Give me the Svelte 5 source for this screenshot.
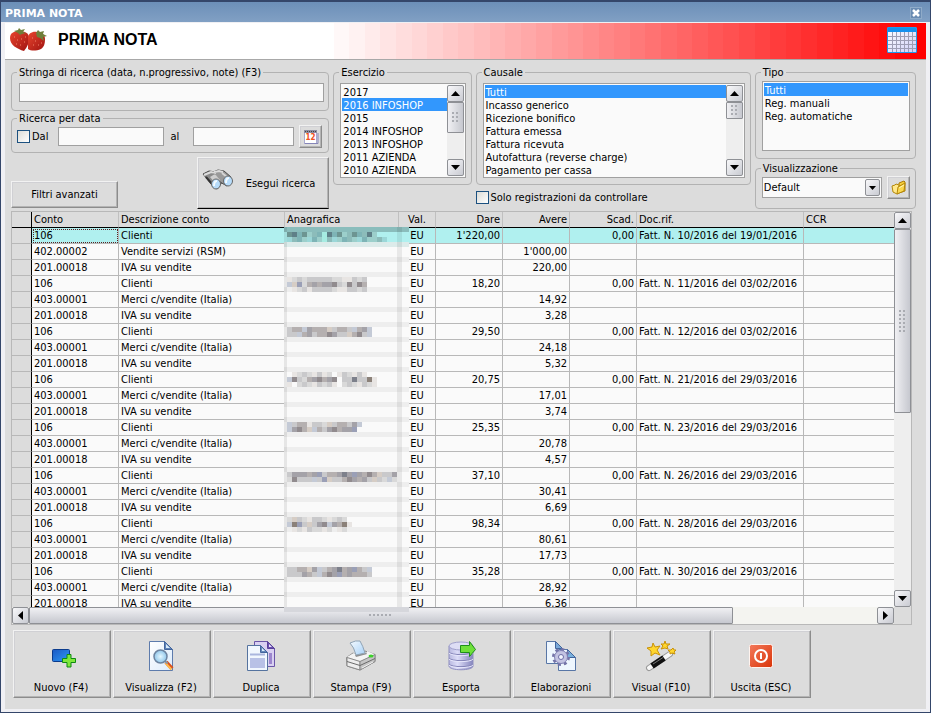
<script>
  const esercizi = ['2017', '2016 INFOSHOP', '2015', '2014 INFOSHOP', '2013 INFOSHOP', '2011 AZIENDA', '2010 AZIENDA'];
  const causali = ['Tutti', 'Incasso generico', 'Ricezione bonifico', 'Fattura emessa', 'Fattura ricevuta', 'Autofattura (reverse charge)', 'Pagamento per cassa'];
  const tipi = ['Tutti', 'Reg. manuali', 'Reg. automatiche'];

  const entries = [
    { dare: "1'220,00", avere: "1'000,00", iva: '220,00', doc: 'Fatt. N. 10/2016 del 19/01/2016', rsm: true },
    { dare: '18,20', avere: '14,92', iva: '3,28', doc: 'Fatt. N. 11/2016 del 03/02/2016' },
    { dare: '29,50', avere: '24,18', iva: '5,32', doc: 'Fatt. N. 12/2016 del 03/02/2016' },
    { dare: '20,75', avere: '17,01', iva: '3,74', doc: 'Fatt. N. 21/2016 del 29/03/2016' },
    { dare: '25,35', avere: '20,78', iva: '4,57', doc: 'Fatt. N. 23/2016 del 29/03/2016' },
    { dare: '37,10', avere: '30,41', iva: '6,69', doc: 'Fatt. N. 26/2016 del 29/03/2016' },
    { dare: '98,34', avere: '80,61', iva: '17,73', doc: 'Fatt. N. 28/2016 del 29/03/2016' },
    { dare: '35,28', avere: '28,92', iva: '6,36', doc: 'Fatt. N. 30/2016 del 29/03/2016' }
  ];
  const rows = entries.flatMap((e) => [
    { conto: '106', descr: 'Clienti', dare: e.dare, avere: '', scad: '0,00', doc: e.doc },
    { conto: e.rsm ? '402.00002' : '403.00001', descr: e.rsm ? 'Vendite servizi (RSM)' : 'Merci c/vendite (Italia)', dare: '', avere: e.avere, scad: '', doc: '' },
    { conto: '201.00018', descr: 'IVA su vendite', dare: '', avere: e.iva, scad: '', doc: '' }
  ]);

  // Mosaic that hides the customer names: one letter per 5px block.
  const tones = {
    a: '#c9c9cb', b: '#b5b0b0', c: '#a4a2a8', d: '#918b8e', e: '#d9d9d9', f: '#e8e5e3',
    g: '#c4cad6', h: '#9a9fb6', i: '#d6cdc5', j: '#7d808b', k: '#8b8179',
    p: '#8cbcba', q: '#6d9592', r: '#7eb4b6', s: '#5f8088', t: '#9ccfcb', u: '#a6ece2', v: '#9bd7d8'
  };
  const mosaic = [
    [1, 'qsrqtprusrqtpqrpst'], [2, 'vprtvrtupvtrptvrttpv'],
    [10, 'feaeaaaaaeeffaea'], [11, 'gihebcbccdaedadb'], [12, '.feafaaaaeffaaea'],
    [20, 'abbgcbbbiabbagbcg'], [21, 'aagbcabbdcaaibdag'],
    [29, '.feaefafe.faefaf.'], [30, 'gdaebcdbcd.aajaakf'], [31, 'f.eaefaeaf.eaefaef'],
    [39, 'gabbfaaeiabbacg'], [40, 'gcdbigbacdbcch'],
    [49, 'acccbchabbcjchcbdbiaac'], [50, 'edaaagahiaabdcbcaiaege'],
    [58, 'eiaefaaefeae'], [59, 'gkhaiacdgcbkf'], [60, '.fefaeefe.fe.'],
    [68, 'aabbicgabcjbchbag'], [69, 'aaacbagbdchbcbbba']
  ];
  const blocks = mosaic.flatMap(([k, s]) => [...s].map((t, n) => ({ x: 3 + n * 5, y: k * 5, fill: tones[t] })).filter((b) => b.fill));
  const bands = Array.from({ length: 23 }, (_, r) => Math.floor((16 + 16 * (r + 1)) / 5) * 5);

  // Banner fades from white to red in flat vertical steps.
  const steps = 39;
  const banner = 'linear-gradient(90deg, #fff 34%, ' + Array.from({ length: steps }, (_, n) => {
    const v = Math.round(255 - (255 * n) / (steps - 1));
    const at = (m) => (34 + (66 * m) / steps).toFixed(2) + '%';
    return `rgb(255 ${v} ${v}) ${at(n)} ${at(n + 1)}`;
  }).join(', ') + ')';

  let esercizio = $state('2016 INFOSHOP');
  let causale = $state('Tutti');
  let tipo = $state('Tutti');
  let active = $state(0);

  const actions = [
    ['Nuovo (F4)', 'nuovo'], ['Visualizza (F2)', 'visualizza'], ['Duplica', 'duplica'], ['Stampa (F9)', 'stampa'],
    ['Esporta', 'esporta'], ['Elaborazioni', 'elabora'], ['Visual (F10)', 'visual'], ['Uscita (ESC)', 'uscita']
  ];
</script>

{#snippet arrow(dir, label)}
  <button class="arrow" aria-label={label}>
    <svg width="9" height="9" viewBox="0 0 9 9">
      <path d={{ up: 'M0 7h9L4.500 2z', down: 'M0 2h9L4.500 7z', left: 'M2 4.500L7 0v9z', right: 'M7 4.500L2 0v9z' }[dir]} />
    </svg>
  </button>
{/snippet}

{#snippet vscroll(size)}
  <div class="vscroll">
    {@render arrow('up', 'Scorri su')}
    <div class="track"><div class="thumb" style="height:{size}%"><span class="grip"></span></div></div>
    {@render arrow('down', 'Scorri giù')}
  </div>
{/snippet}

{#snippet icon(name)}
  <svg class="ico" width="32" height="32" viewBox="0 0 32 32">
    {#if name === 'nuovo'}
      <rect x="7.500" y="9.500" width="17" height="12" rx="1" fill="url(#blue)" stroke="#0b3b8c" />
      <path d="M22 14.500h4v4h4.500v4H26v4.500h-4v-4.500h-4.500v-4H22z" fill="#7fe83c" stroke="#0f8a12" />
    {:else if name === 'visualizza'}
      <path d="M4.500 1.500h15l8 8v21h-23z" fill="url(#paper)" stroke="#5d7bac" />
      <path d="M19.500 1.500v8h8z" fill="#5f83b8" stroke="#42659d" /><path d="M21 4l4 4h-4z" fill="#d7ebfa" />
      <path d="M21 22l6 6.500" stroke="#d9501e" stroke-width="4" /><path d="M20.500 23l6 6.500" stroke="#ffb84a" stroke-width="2" />
      <path d="M19.500 20.500l3 3" stroke="#8a96a5" stroke-width="2" />
      <circle cx="15.500" cy="16.500" r="6.500" fill="url(#lens)" stroke="#6d84a0" stroke-width="1.500" />
    {:else if name === 'duplica'}
      <path d="M9.500 1.500h13l7 7v18h-20z" fill="#d9d0f2" stroke="#6a55a8" /><path d="M22.500 1.500v7h7z" fill="#6a4fae" stroke="#58409b" /><path d="M24 4l3 3h-3z" fill="#e8e2fb" />
      <rect x="24" y="13" width="3" height="11" fill="#9c86ce" />
      <path d="M2.500 5.500h13l7 7v18h-20z" fill="#f1f7fe" stroke="#55739f" /><path d="M15.500 5.500v7h7z" fill="#6487ba" stroke="#42659d" /><path d="M17 8l3 3h-3z" fill="#dceefb" />
      <path d="M5 14.500h15" stroke="#aab6de" stroke-width="2" /><rect x="5" y="18" width="15" height="10" fill="#b8c1e6" />
    {:else if name === 'stampa'}
      <path d="M1.500 17.500L8 13l2 1 10-3 10 3.500v7L15 30 2 26z" fill="#d4d4d4" stroke="#8b8b8b" />
      <path d="M2 17l7-4 3 3 10-2v-3l8 3.500L15 21z" fill="#f4f4f4" />
      <path d="M2 17.500l13 4V30L2 26z" fill="#ededed" stroke="#8a8a8a" />
      <path d="M15 21.500l15-7v7L15 30z" fill="#c4c4c4" stroke="#8a8a8a" />
      <path d="M2 21.500l13 4 15-7" fill="none" stroke="#6b6b6b" /><path d="M17 28l11-6" stroke="#f2f2f2" />
      <path d="M10 15l11-2 1 1-11 3z" fill="#8f8f8f" />
      <path d="M5 3q6-3 10-2 3 5 5 12l-9 2Q9 7 5 3z" fill="url(#sheet)" stroke="#8fa3b5" />
      <ellipse cx="26" cy="16" rx="2.500" ry="1.500" fill="#3dd02c" />
    {:else if name === 'esporta'}
      <path d="M4 6v20c0 5 24 5 24 0V6z" fill="url(#drum)" stroke="#8f8fc0" />
      <path d="M4 12c2 3.500 22 3.500 24 0M4 18c2 3.500 22 3.500 24 0M4 24c2 3.500 22 3.500 24 0" fill="none" stroke="#8484b8" /><path d="M4 13c2 3.500 22 3.500 24 0M4 19c2 3.500 22 3.500 24 0M4 25c2 3.500 22 3.500 24 0" fill="none" stroke="#e6e6fb" />
      <ellipse cx="16" cy="6" rx="12" ry="4" fill="#dedef5" stroke="#a0a0cc" />
      <path d="M15.500 5.500h9v-4l6 8-6 7v-4h-9z" fill="#6fe03a" stroke="#1f8f1a" />
    {:else if name === 'elabora'}
      <path d="M1.500 1.500h9l7 7v15h-16z" fill="#eef6fe" stroke="#5876a6" /><path d="M10.500 1.500v7h7z" fill="#79a8d8" stroke="#42659d" />
      <path d="M13.500 9.500h9l8 8v13h-17z" fill="#eef6fe" stroke="#5876a6" /><path d="M22.500 9.500v8h8z" fill="#79b0dc" stroke="#42659d" />
      <circle cx="16" cy="17" r="7.500" fill="none" stroke="#7474a8" stroke-width="3" stroke-dasharray="3 2.890" />
      <circle cx="16" cy="17" r="6.500" fill="#c3c3e2" stroke="#8080b4" /><circle cx="16" cy="17" r="2.500" fill="#f4f6ff" stroke="#6d6da5" />
    {:else if name === 'visual'}
      <path d="M4 28L25 14" stroke="#999" stroke-width="6" stroke-linecap="round" /><path d="M4 28L25 14" stroke="#f8f8f8" stroke-width="4" stroke-linecap="round" />
      <path d="M7 26L19 18" stroke="#111" stroke-width="6" /><path d="M8 24l10-6.500" stroke="#777" />
      <path d="M8 3l2 4 5-1-3 4 3 5-5-2-4 3v-5L2 8l5-1z" fill="#ffd62e" stroke="#c99208" />
      <path d="M20 1l1 3h4l-3 2 1 3-3-1-4 1 2-3-2-2h3z" fill="#ffd62e" stroke="#c99208" /><path d="M28 8l1 2h2l-2 2 1 2-3-1-2 1v-2l-2-2h3z" fill="#ffd62e" stroke="#c99208" />
    {:else}
      <rect x="4.500" y="4.500" width="23" height="23" rx="2" fill="url(#red)" stroke="#fff3ee" />
      <circle cx="16" cy="16" r="6" fill="none" stroke="#fff" stroke-width="2" /><path d="M16 13v6" stroke="#fff" stroke-width="2" />
    {/if}
  </svg>
{/snippet}

<svg class="defs" width="0" height="0" aria-hidden="true">
  <defs>
    <linearGradient id="blue" x2="1" y2="1"><stop stop-color="#1b59c4" /><stop offset="1" stop-color="#2f9af5" /></linearGradient>
    <linearGradient id="paper" x2="1" y2="1"><stop stop-color="#fff" /><stop offset="1" stop-color="#dcebfb" /></linearGradient>
    <linearGradient id="sheet" x2="1" y2="1"><stop stop-color="#f4faff" /><stop offset="1" stop-color="#a9d2f8" /></linearGradient>
    <radialGradient id="lens"><stop stop-color="#e4f7ff" /><stop offset="1" stop-color="#8fc6ea" /></radialGradient>
    <linearGradient id="drum"><stop stop-color="#b9b9e0" /><stop offset=".35" stop-color="#dcdcf8" /><stop offset="1" stop-color="#8585bd" /></linearGradient>
    <linearGradient id="red" x2="1" y2="1"><stop stop-color="#f47a5c" /><stop offset="1" stop-color="#d93408" /></linearGradient>
    <linearGradient id="berry" x2="1" y2="1"><stop stop-color="#e8452e" /><stop offset="1" stop-color="#a01310" /></linearGradient>
    <linearGradient id="cells" x2="1" y2="1"><stop stop-color="#fff" /><stop offset="1" stop-color="#cfcff8" /></linearGradient>
  </defs>
</svg>

<div class="window">
  <header class="titlebar">
    <span>PRIMA NOTA</span>
    <button class="close" aria-label="Chiudi"><svg width="8" height="8" viewBox="0 0 8 8"><path d="M1 1l6 6M7 1l-6 6" stroke="#fff" stroke-width="2.500" /></svg></button>
  </header>

  <div class="frame">
    <div class="banner" style="background:{banner}">
      <svg width="38" height="26" viewBox="0 0 38 26">
        <path d="M0 11c0-5 4-7 9-7 6 0 10 2 10 7 0 6-2 9-5 13C7 22 0 18 0 11z" fill="url(#berry)" />
        <path d="M18 11c0-5 5-7 9-6 5 0 8 3 8 7 0 5-1 8-4 10-5 2-10 2-13 0z" fill="url(#berry)" />
        <path d="M4 4l4-1 1-2 2 2 4-1-2 3 3 1-4 1-2 1-2-2zM26 6l2-3 2 2 4-1-1 3 4 2-4 1 1 4-4-3-3-1z" fill="#6f7f3a" />
        <path d="M4 10h1M7 13h1M6 17h1M11 12h1M10 18h1M14 15h1M15 10h1M22 11h1M25 14h1M23 18h1M28 18h1M31 16h1" stroke="#f0836a" />
      </svg>
      <h1>PRIMA NOTA</h1>
      <svg width="30" height="26" viewBox="0 0 30 26">
        <rect x="0.500" y="0.500" width="29" height="25" rx="1" fill="url(#cells)" stroke="#1c9cf0" />
        <rect x="1" y="1" width="28" height="4" fill="#1590ee" />
        <path d="M5.500 5v20M9.500 5v20M13.500 5v20M17.500 5v20M21.500 5v20M25.500 5v20M1 9.500h28M1 13.500h28M1 17.500h28M1 21.500h28" stroke="#9d9db4" />
        <rect x="0.500" y="0.500" width="29" height="25" rx="1" fill="none" stroke="#1c9cf0" />
      </svg>
    </div>

    <main>
      <section class="filters">
        <div class="col">
          <fieldset class="search">
            <legend><label for="q">Stringa di ricerca (data, n.progressivo, note) (F3)</label></legend>
            <input id="q" type="text" />
          </fieldset>
          <fieldset class="dates">
            <legend>Ricerca per data</legend>
            <div class="daterow">
              <label class="check"><input type="checkbox" />Dal</label>
              <input class="from" type="text" aria-label="Dal" />
              <label class="al" for="to">al</label>
              <input class="to" id="to" type="text" />
              <button class="raised small" aria-label="Calendario">
                <svg width="16" height="16" viewBox="0 0 16 16">
                  <rect x="1.500" y="2.500" width="12" height="12" fill="#fff" stroke="#a9a9cf" /><path d="M2 14.500h13V4" fill="none" stroke="#8585b8" />
                  <rect x="1" y="1" width="13" height="3" fill="#8f8fa3" /><path d="M2 2.500h11" stroke="#444" stroke-dasharray="1 1" />
                  <text x="7.500" y="11" text-anchor="middle" font-size="8" font-weight="bold" fill="#f0501c">12</text>
                </svg>
              </button>
            </div>
          </fieldset>
          <div class="run">
            <button class="raised adv">Filtri avanzati</button>
            <button class="raised exec">
              <svg width="32" height="22" viewBox="0 0 32 22">
                <path d="M1 5L7 2l7 1 7 9-6 8-5-4z" fill="#8a8a8a" stroke="#444" /><path d="M11 3l5-2 6 1 7 6-4 9-7-4z" fill="#999" stroke="#4a4a4a" />
                <path d="M2 6l7-3 5 1M12 3l5-1 4 1" fill="none" stroke="#dcdcdc" stroke-width="2" /><path d="M8 8l5-3 5 6-4 4z" fill="#cfcfcf" /><path d="M20 4l5 4" stroke="#d5d5d5" stroke-width="2" /><path d="M4 8l6 7" stroke="#333" stroke-width="2" />
                <ellipse cx="14" cy="15" rx="4.500" ry="5" fill="#b7dcfa" stroke="#666" /><ellipse cx="26" cy="12" rx="4.500" ry="5" fill="#b7dcfa" stroke="#666" />
                <path d="M12 17c0-3 1-5 3-5M24 14c0-3 1-5 3-5" fill="none" stroke="#f4fbff" stroke-width="2" />
              </svg>
              <span>Esegui ricerca</span>
            </button>
          </div>
        </div>

        <div class="col">
          <fieldset class="lists">
            <legend><label for="es">Esercizio</label></legend>
            <div class="listbox">
              <select id="es" size="7" bind:value={esercizio}>
                {#each esercizi as o}<option value={o} class:on={o === esercizio}>{o}</option>{/each}
              </select>
              {@render vscroll(54)}
            </div>
          </fieldset>
        </div>

        <div class="col">
          <fieldset class="lists">
            <legend><label for="ca">Causale</label></legend>
            <div class="listbox">
              <select id="ca" size="7" bind:value={causale}>
                {#each causali as o}<option value={o} class:on={o === causale}>{o}</option>{/each}
              </select>
              {@render vscroll(30)}
            </div>
          </fieldset>
          <label class="check only"><input type="checkbox" />Solo registrazioni da controllare</label>
        </div>

        <div class="col">
          <fieldset class="tipo">
            <legend><label for="ti">Tipo</label></legend>
            <div class="listbox">
              <select id="ti" size="5" bind:value={tipo}>
                {#each tipi as o}<option value={o} class:on={o === tipo}>{o}</option>{/each}
              </select>
            </div>
          </fieldset>
          <fieldset class="vis">
            <legend><label for="vi">Visualizzazione</label></legend>
            <div class="visrow">
              <div class="combo">
                <select id="vi"><option>Default</option></select>
                <span class="drop"><svg width="9" height="9" viewBox="0 0 9 9"><path d="M1 3h7L4.500 7z" /></svg></span>
              </div>
              <button class="raised small" aria-label="Apri visualizzazione">
                <svg width="16" height="16" viewBox="0 0 16 16">
                  <path d="M8 3l5-2 1 1v9l-6 2z" fill="#f7cf3a" stroke="#a97b08" /><path d="M1 6l3-1 1-1 3 1v8l-2 1-4-2z" fill="#ffe88a" stroke="#b48709" /><path d="M6 14l1-7 7-4-1 8z" fill="#fbd84e" stroke="#b48709" /><path d="M8 8l5-3" stroke="#fff3b4" />
                </svg>
              </button>
            </div>
          </fieldset>
        </div>
      </section>

      <section class="grid">
        <div class="view">
          <table>
            <colgroup><col class="c0" /><col class="c1" /><col class="c2" /><col class="c3" /><col class="c4" /><col class="c5" /><col class="c5" /><col class="c5" /><col class="c6" /><col /></colgroup>
            <thead>
              <tr><th class="mark"></th><th>Conto</th><th>Descrizione conto</th><th>Anagrafica</th><th class="mid">Val.</th><th class="num">Dare</th><th class="num">Avere</th><th class="num">Scad.</th><th>Doc.rif.</th><th>CCR</th></tr>
            </thead>
            <tbody>
              {#each rows as r, n}
                <tr class:active={n === active} onclick={() => (active = n)}>
                  <td class="mark"></td><td class="key">{r.conto}</td><td>{r.descr}</td><td></td><td class="mid">EU</td>
                  <td class="num">{r.dare}</td><td class="num">{r.avere}</td><td class="num">{r.scad}</td><td>{r.doc}</td><td></td>
                </tr>
              {/each}
            </tbody>
          </table>
        </div>
        {@render vscroll(51)}
        <div class="hscroll">
          {@render arrow('left', 'Scorri a sinistra')}
          <div class="track"><div class="thumb" style="width:83%"><span class="grip"></span></div></div>
          {@render arrow('right', 'Scorri a destra')}
        </div>
        <svg class="mosaic" width="125" height="385" viewBox="0 0 125 385" shape-rendering="crispEdges" aria-hidden="true">
          <rect width="125" height="385" fill="#fafafa" />
          {#each bands as y}<rect x="0" {y} width="125" height="5" fill="#eee" />{/each}
          <rect width="125" height="15" y="5" fill="#b0f0ef" /><rect width="125" height="5" fill="#8abdbc" /><rect y="15" width="125" height="5" fill="#dcebea" />
          <rect width="3" height="385" fill="#000" opacity=".08" /><rect x="113" width="5" height="385" fill="#000" opacity=".07" />
          {#each blocks as b}<rect x={b.x} y={b.y} width="5" height="5" fill={b.fill} />{/each}
          <rect y="380" width="125" height="5" fill="#d6d7dc" />
        </svg>
      </section>

      <nav class="actions">
        {#each actions as [label, name]}
          <button class="raised action">{@render icon(name)}<span>{label}</span></button>
        {/each}
      </nav>
    </main>
  </div>
</div>

<style>
  :global(body) { margin: 0; }
  .defs { position: absolute; }
  .window, .window button, .window input, .window select { font-family: 'DejaVu Sans Condensed', 'DejaVu Sans', sans-serif; font-size: 11px; line-height: 13px; color: #000; }
  .window * { box-sizing: border-box; }
  .window { box-sizing: border-box; height: 100vh; display: flex; flex-direction: column; border: 1px solid #34466a; border-top-width: 2px; }
  svg { display: block; flex: none; }
  button { padding: 0; margin: 0; border-radius: 0; }

  .titlebar { flex: none; height: 20px; padding: 3px 8px 0 4px; display: flex; align-items: center; justify-content: space-between; background: linear-gradient(#6c8fb8, #81a0c4); }
  .titlebar span { font-family: 'DejaVu Sans', sans-serif; font-weight: bold; color: #fff; }
  .close { width: 12px; height: 12px; margin-bottom: 2px; display: grid; place-items: center; background: #6a8cb3; border: 1px solid #8fabc9; }
  .frame { flex: 1; min-height: 0; display: flex; flex-direction: column; border: solid #f0f0f4; border-width: 1px 4px 3px; }
  .banner { flex: none; height: 37px; display: flex; align-items: center; padding: 0 9px 2px 5px; border-bottom: 1px solid #a8a8a8; }
  h1 { margin: 0 auto 0 10px; font: bold 16px/20px 'Liberation Sans', Arial, sans-serif; }
  main { flex: 1; min-height: 0; display: flex; flex-direction: column; padding: 6px 9px 11px 6px; background: #dcdcdc; }

  .filters { flex: none; display: grid; grid-template-columns: 318fr 138fr 275fr 161fr; column-gap: 4px; margin-right: 1px; height: 144px; }
  .col { min-width: 0; display: flex; flex-direction: column; }
  fieldset { margin: 0; min-width: 0; padding: 4px 5px 6px 6px; border: 1px solid #b2b2b2; border-radius: 4px; }
  legend { padding: 0 2px; margin-left: -1px; height: 13px; white-space: nowrap; }
  input[type='text'] { height: 19px; min-width: 0; padding: 0 3px; border: 1px solid #a0a0a0; border-radius: 0; background: #fafafa; }
  .search { height: 45px; padding: 4px 4px 6px 7px; }
  .search input { display: block; width: 100%; }
  .dates { height: 41px; margin-top: 1px; padding: 0 6px 0 5px; }
  .dates legend { margin-left: 0; }
  .search legend { margin-left: -2px; }
  .daterow { display: flex; align-items: center; height: 23px; }
  .check { display: flex; align-items: center; gap: 2px; white-space: nowrap; }
  input[type='checkbox'] { appearance: none; flex: none; margin: 0; width: 13px; height: 13px; border: 1px solid #1c5180; background: linear-gradient(135deg, #dcdcd7, #fff); }
  .check:first-child { width: 41px; }
  .from { flex: 107; }
  .al { width: 29px; padding-left: 6px; }
  .to { flex: 101; margin-right: 5px; }
  .raised { border: 1px solid; border-color: #f2f2f2 #8c8c8c #8c8c8c #f2f2f2; background: #dcdcdc; box-shadow: inset -1px -1px #b4b4b4, inset 1px 1px #d0d0d4; display: flex; align-items: center; justify-content: center; }
  .small { flex: none; width: 23px; height: 23px; }
  .run { flex: 1; display: flex; align-items: flex-end; justify-content: space-between; padding-bottom: 1px; }
  .adv { width: 107px; height: 27px; margin-bottom: 1px; }
  .exec { width: 132px; height: 52px; border-bottom-color: #000; justify-content: space-between; padding: 0 13px 0 4px; }
  .exec svg { margin-bottom: 6px; }

  .lists { height: 119px; }
  .listbox { display: flex; border: 1px solid #a0a0a0; padding: 1px; background: #fafafa; }
  .listbox select { appearance: none; display: block; flex: 1; min-width: 0; margin: 0; padding: 0; height: 91px; border: 0; border-radius: 0; outline: 0; background: none; overflow: hidden; scrollbar-width: none; }
  .listbox option { min-height: 0; height: 13px; padding: 1px 1px 0; line-height: 12px; }
  .listbox option.on { background: #3297fd linear-gradient(#3297fd, #3297fd); color: #fff; }
  .only { margin-top: 6px; }
  .tipo { height: 93px; padding-top: 2px; }
  .tipo .listbox { padding-bottom: 2px; }
  .tipo .listbox select { height: 65px; }
  .vis { height: 47px; margin-top: 3px; padding-top: 0; }
  .visrow { display: flex; align-items: center; gap: 5px; height: 25px; }
  .combo { flex: 1; min-width: 0; display: flex; height: 21px; border: 1px solid #a0a0a0; background: #fafafa; position: relative; }
  .combo select { appearance: none; width: 100%; border: 0; padding: 0 20px 0 1px; background: none; }
  .drop { position: absolute; right: 1px; top: 1px; pointer-events: none; }
  .arrow, .drop { flex: none; width: 17px; height: 17px; display: grid; place-items: center; border: 1px solid #8e9095; border-radius: 2px; background: linear-gradient(135deg, #f8f8fa, #c9cbd2); }
  .drop { width: 15px; }

  .vscroll { flex: none; width: 17px; display: flex; flex-direction: column; background: #eee; }
  .track { flex: 1; display: flex; min-height: 0; min-width: 0; }
  .vscroll .track { flex-direction: column; }
  .thumb { display: grid; place-items: center; border: 1px solid #8e9095; border-radius: 1px; background: linear-gradient(90deg, #f0f0f3, #c6c8cf); }
  .grip { width: 7px; height: 23px; background: radial-gradient(circle at 1px 1px, #aaacb2 1px, transparent 1px) 0 0 / 4px 4px; }
  .listbox .grip { height: 11px; }
  .hscroll { grid-column: 1; display: flex; height: 17px; background: #f4f4f0; }
  .hscroll .thumb { background: linear-gradient(#f0f0f3, #c6c8cf); }
  .hscroll .grip { width: 24px; height: 3px; }

  .grid { flex: 1; min-height: 0; margin: 1px 5px 0 0; position: relative; display: grid; grid-template: minmax(0, 1fr) 17px / minmax(0, 1fr) 17px; border: 1px solid #b8b8b8; }
  .view { overflow: hidden; background: #fafafa; }
  table { width: 100%; table-layout: fixed; border-collapse: separate; border-spacing: 0; }
  .c0 { width: 20px; } .c1 { width: 87px; } .c2 { width: 166px; } .c3 { width: 114px; } .c4 { width: 37px; } .c5 { width: 67px; } .c6 { width: 167px; }
  th, td { height: 16px; padding: 1px 2px 0; line-height: 14px; font-weight: normal; text-align: left; white-space: nowrap; overflow: hidden; border-right: 1px solid #b8b8b8; border-bottom: 1px solid #b8b8b8; }
  th { background: #dcdcdc; border-bottom-color: #000; border-right-color: #c0c0c0; }
  th:last-child, td:last-child { border-right: 0; }
  .mark { background: #dcdcdc; border-right-color: #000; }
  .mid { text-align: center; }
  .num { text-align: right; }
  .active td:not(.mark) { background: #b0f0ef; }
  .active .key { outline: 1px dotted #5a2020; outline-offset: -2px; }
  .mosaic { position: absolute; left: 272px; top: 15px; }

  .actions { flex: none; display: flex; gap: 2px; margin: 5px 0 0 2px; }
  .action { width: 98px; height: 68px; flex-direction: column; justify-content: space-between; padding: 9px 2px 3px 0; }
</style>
